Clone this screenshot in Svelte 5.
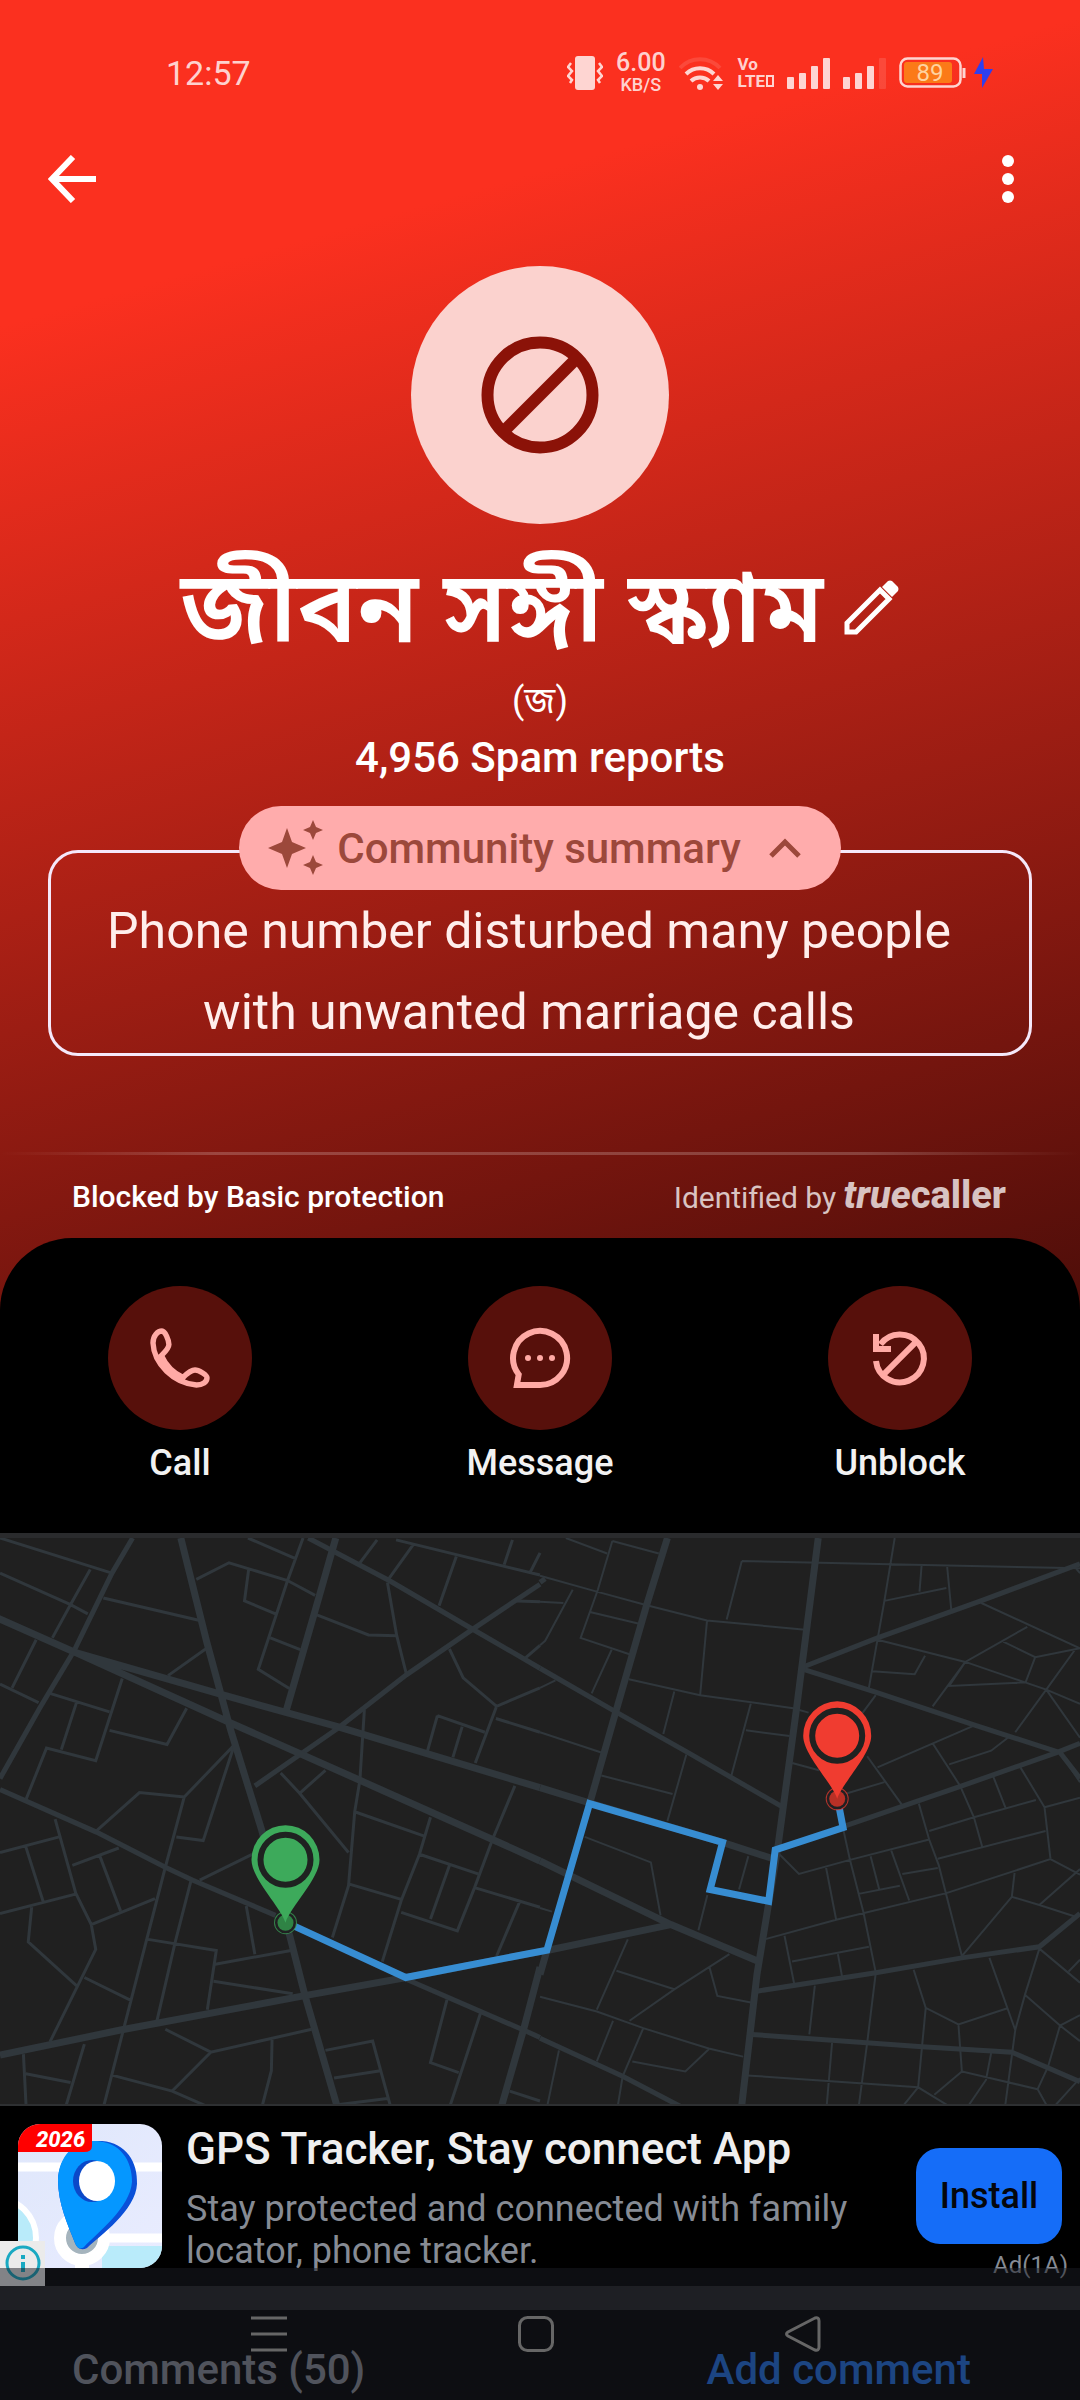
<script lang="ts">
  const actions = ['Call', 'Message', 'Unblock'];
  const bars = [12, 16, 23, 31];

  // street map, drawn as two tiles next to each other
  const west = {
    wide:
      'M-10 235L220 330L650 445L980 530L1568 695 M220 330L670 520L1045 675L1430 835L1568 893 M525 20L600 300L670 540L760 810L829 1050L885 1255L980 1560 M0 1418L350 1350L885 1257L1180 1208L1568 1138 M975 20L920 200L830 490 M1568 1180L1520 1350L1455 1560',
    mid:
      'M740 690L980 535L1180 390L1375 265L1568 145 M895 20L1130 135L1375 268L1568 372 M385 20L325 115L215 325L115 480L0 670 M0 700L280 815L480 910L560 945L800 1040 M1178 1212L1520 1350L1568 1370',
    thin:
      'M0 20L325 115 M0 115L205 200L255 225 M262 105L205 200L152 290 M300 182L580 243 M570 132L665 87L835 135L915 175 M722 105L710 190L800 225 M880 20L835 135L750 375L840 427 M785 290L872 322 M720 20L858 76 M600 318L488 392 M920 228L1070 282L1152 284 M1125 140L1152 284L1180 388 M1200 38L1125 135 M1095 25L1045 87 M1150 25L1568 120 M1325 70L1275 203 M1488 25L1464 92 M1568 60L1540 112 M1500 190L1568 192 M1305 320L1345 398L1442 475L1568 425 M1442 475L1380 628 M1440 508L1568 545 M1270 500L1240 600 M1270 500L1408 545 M1342 530L1315 613 M1568 310L1525 345 M105 295L35 425 M0 415L112 465 M145 440L318 490 M355 400L278 622L135 588L75 728 M222 465L178 592 M318 540L485 578L542 480 M680 580L535 720L405 708L280 812 M680 580L590 838L512 828 M535 720L480 910L300 1560 M1058 485L1045 675L1030 760L1012 960L965 1100 M815 655L870 710L1012 870 M870 710L945 648 M1030 760L1230 825 M1250 775L1218 875L1165 1000L1110 1165 M1218 875L1388 928 M1430 835L1378 965L1328 1082L1165 1032 M1305 905L1250 1050 M1012 955L1165 997 M1495 690L1430 835 M1378 965L1568 1018 M1508 1005L1442 1150 M0 870L172 828 M160 780L220 980L265 1065L278 1132L145 1382 M75 855L125 1002 M0 1035L222 982 M92 1018L82 1112L222 1230 M210 905L345 858 M290 880L350 1028 M265 1065L450 995 M555 945L508 1115L455 1328 M430 1105L628 1135L602 1295 M625 1172L845 1135 M715 1015L740 1145 M620 1218L850 1252 M580 945L732 875 M245 1208L380 1270 M68 1415L76 1560 M75 1468L205 1492 M245 1388L190 1560 M325 1472L500 1515L610 1560 M480 1348L612 1410L905 1348 M612 1410L500 1515 M790 1375L788 1460L760 1560 M945 1405L1082 1380L1135 1560 M970 1480L1105 1460 M980 1552L1125 1535 M1298 1268L1250 1438L1332 1465 M1395 1305L1305 1560 M1480 1515L1568 1542'
  };
  const east = {
    wide:
      'M0 695L140 735L530 843L670 885 M0 893L380 1065L635 1165 M20 1135L380 1065 M370 20L310 200L220 490L145 735 M20 1135L0 1200 M808 20L745 480L690 860L630 1200L585 1560',
    mid:
      'M0 140L15 130 M0 372L220 490L430 600L700 745 M760 370L980 290L1280 190L1568 90 M765 375L970 435L1260 525L1510 600L1568 670 M880 800L1225 690L1500 600L1568 575 M630 1245L975 1195L1225 1155L1450 1125L1568 1035 M615 1362L1110 1395L1370 1410L1568 1490 M0 1372L240 1475L415 1560',
    thin:
      'M75 20L195 62 M210 28L345 62 M210 28L168 160L118 290L262 335 M0 122L165 165L310 202L485 243L770 268 M145 220L288 252 M0 192L68 196 M95 160L15 298L0 310 M208 322L150 440 M0 425L45 405 M586 82L1568 102 M586 82L542 240 M485 243L465 445 M258 402L465 445L735 480L780 492 M390 435L358 550 M612 468L555 665 M598 540L725 555 M0 545L178 600 M425 605L370 785 M178 662L385 712 M1030 20L1000 190L955 425 M1108 95L1102 165 M1000 190L1180 155 M1182 95L1194 212 M1280 195L1568 318L1438 342L1345 300 M1415 260L1235 355L1188 420L1410 410L1438 342 M980 295L1235 355L1470 430L1568 468 M965 380L1088 388L1118 338 M1235 355L1140 475 M1555 320L1470 430L1380 545 M1470 430L1568 560 M1550 95L1568 115 M975 445L935 495 M732 628L810 648 M980 640L1260 527 M950 610L1050 740 M1140 575L1220 690L1260 775L1285 858 M1188 632L1310 595L1365 555 M885 712L1000 680 M1315 662L1352 750 M1395 640L1465 748L1482 885 M1130 812L1260 775L1440 728 M1465 748L1568 722 M1155 887L1468 812 M1510 600L1568 680 M1100 738L1130 835L1158 905L1225 1150 M880 805L900 890L940 1035L975 1195L950 1385L925 1560 M690 870L752 928L900 890L1130 835 M830 908L860 1052 M960 880L985 970 M1020 865L1072 1000 M925 982L1045 960 M1052 928L1155 912 M652 1105L860 1052L1180 980L1482 888L1568 930 M710 1095L738 1225 M732 1165L955 1125 M865 1145L878 1210 M1378 925L1370 990L1225 1150 M1370 990L1450 1012L1560 1045 M1450 1012L1568 915 M130 828L322 897L350 1040 M605 880L578 970 M486 985L460 1080 M0 1020L35 1030 M255 1105L165 1295 M222 1190L390 1240 M550 1145L390 1240L260 1325 M492 1180L515 1258L620 1277 M0 1260L165 1300L300 1345L490 1400L590 1422 M212 1325L165 1435 M300 1345L240 1475L225 1560 M268 1435L422 1462L490 1402 M55 1405L20 1560 M798 1230L782 1362 M1085 1187L1120 1290L1215 1335L1355 1292 M1305 1155L1380 1350L1350 1560 M1450 1130L1408 1255L1380 1350 M1408 1255L1510 1338L1568 1380 M1510 1338L1475 1450L1445 1510L1475 1560 M1568 1310L1510 1338 M1450 1130L1568 1222 M1535 1192L1568 1160 M1215 1335L1225 1462L1445 1510 M1120 1290L1098 1505L1050 1560 M590 1472L1098 1505L1195 1560 M848 1385L832 1560 M1225 1462L1145 1525 M1310 1412L1295 1485L1240 1560 M1568 1480L1490 1560'
  };
</script>

{#snippet pin(x: number, y: number, color: string, dark: string)}
  <g transform="translate({x} {y}) scale(2.904 2.703)">
    <circle r="11" fill="#202022" stroke={color} stroke-opacity="0.7" />
    <circle r="8" fill={dark} />
    <path d="M0 0C-5-16-34-44-34-63A33.500 34 0 0 1 34-63C34-44 5-16 0 0Z" fill={color} />
    <circle cy="-63" r="25" fill="none" stroke="#1f2221" stroke-width="6" />
  </g>
{/snippet}

{#snippet signal(weakLast: boolean)}
  <svg width="43" height="31" viewBox="0 0 43 31" fill="currentColor">
    {#each bars as h, i}
      <rect x={i * 12} y={31 - h} width="7" height={h} rx="1" opacity={weakLast && i === 3 ? 0.15 : 1} />
    {/each}
  </svg>
{/snippet}

<div class="page">
  <div class="status-bar">
    <span class="clock">12:57</span>
    <div class="status-icons">
      <svg width="36" height="36" viewBox="0 0 36 36">
        <rect x="8" y="1" width="20" height="34" rx="3" fill="currentColor" />
        <path d="M4 8L1 12L5 16L1 21L5 25L3 28M32 8L35 12L31 16L35 21L31 25L33 28" fill="none" stroke="currentColor" stroke-width="2.500" />
      </svg>
      <span class="speed"><b>6.00</b><small>KB/S</small></span>
      <svg class="wifi" width="46" height="34" viewBox="0 0 46 34" fill="none" stroke="currentColor" stroke-width="4">
        <path d="M1 12A27 27 0 0 1 41 12" opacity="0.15" />
        <path d="M7 18A20 20 0 0 1 35 18" />
        <path d="M12 25A13 13 0 0 1 30 25" />
        <circle cx="21" cy="31" r="3" fill="currentColor" stroke="none" />
        <path d="M34 25L39 19L44 25ZM34 28H44L39 34Z" fill="currentColor" stroke="none" />
      </svg>
      <span class="volte"><span>Vo</span><span>LTE<i></i></span></span>
      {@render signal(false)}
      {@render signal(true)}
      <svg class="battery" width="94" height="34" viewBox="0 0 94 34">
        <rect x="1.500" y="2.500" width="60" height="28" rx="7" fill="none" stroke="currentColor" stroke-width="2.500" />
        <rect x="5" y="6" width="48" height="21" rx="3" fill="#fb7a18" />
        <path d="M65 12V22" stroke="currentColor" stroke-width="3" />
        <text x="31" y="25" text-anchor="middle" font-size="24" fill="#ffd3a0">89</text>
        <path d="M84 1L75 18H83V32L94 13H85Z" fill="#2f3fee" />
      </svg>
    </div>
  </div>

  <div class="top-bar">
    <button class="icon-button" aria-label="Back">
      <svg width="48" height="48" viewBox="0 0 48 48" fill="none" stroke="#fff" stroke-width="6">
        <path d="M25 2L4 24L25 46M4 24H48" />
      </svg>
    </button>
    <button class="icon-button" aria-label="More options">
      <svg width="48" height="48" viewBox="0 0 48 48" fill="#fff">
        <circle cx="24" cy="6" r="6" /><circle cx="24" cy="24" r="6" /><circle cx="24" cy="42" r="6" />
      </svg>
    </button>
  </div>

  <header class="profile">
    <div class="avatar">
      <svg width="118" height="118" viewBox="0 0 118 118" fill="none" stroke="#8b1208">
        <circle cx="59" cy="59" r="52.500" stroke-width="12" />
        <path d="M22 96L96 22" stroke-width="12" />
      </svg>
    </div>
    <div class="name-row">
      <h1>জীবন সঙ্গী স্ক্যাম</h1>
      <button class="icon-button" aria-label="Edit name">
        <svg width="56" height="56" viewBox="0 0 56 56">
          <path d="M4 43L37 10L46 19L13 52H4Z" fill="none" stroke="#fff" stroke-width="5" />
          <path d="M39 7L45 1Q47 0 49 1L55 7Q56 9 55 11L49 17Z" fill="#fff" />
        </svg>
      </button>
    </div>
    <p class="alt-name">(জ)</p>
    <p class="reports">4,956 Spam reports</p>
  </header>

  <section class="summary">
    <button class="pill">
      <svg width="56" height="56" viewBox="0 0 56 56" fill="#9c483b">
        <path d="M20 8L25 22L39 28L25 34L20 48L15 34L1 28L15 22Z" />
        <path d="M46 0L49 7L56 10L49 13L46 20L43 13L36 10L43 7Z" />
        <path d="M46 35L49 42L56 45L49 48L46 55L43 48L36 45L43 42Z" />
      </svg>
      <span>Community summary</span>
      <svg class="chevron" width="32" height="20" viewBox="0 0 32 20" fill="none" stroke="#9c483b" stroke-width="5">
        <path d="M2 18L16 4L30 18" />
      </svg>
    </button>
    <p class="summary-text">Phone number disturbed many people<br />with unwanted marriage calls</p>
  </section>

  <hr />

  <div class="source">
    <span class="blocked">Blocked by Basic protection</span>
    <span class="identified">Identified by <span class="brand"><i>true</i>caller</span></span>
  </div>

  <nav class="actions">
    {#each actions as action}
      <button class="action">
        <span class="action-circle">
          <svg width="72" height="72" viewBox="0 0 24 24" fill="none" stroke="#ffaaa5" stroke-width="2">
            {#if action === 'Call'}
              <path d="M3 7C3 4.500 4.600 3 6 3C7 3 8.300 6 8.300 7.500C8.300 8.800 6.500 10.500 5.800 11.200C7.300 14.500 9.800 17 13 18.500C14 17.500 15.500 16 17 16C18.200 16 21 17.600 21 18.600C21 20 19.500 21 17.500 21C10 20.500 3.300 14 3 7Z" stroke-width="1.800" />
            {:else if action === 'Message'}
              <path d="M12 21H4.300L4.900 17.500A9 9 0 1 1 12 21Z" />
              <g fill="#ffaaa5" stroke="none"><circle cx="8" cy="12" r="1" /><circle cx="12" cy="12" r="1" /><circle cx="16" cy="12" r="1" /></g>
            {:else}
              <path d="M4 13A8 8 0 1 0 5.500 7.400M4 4V9H9M6.400 17.600L17.600 6.400" />
            {/if}
          </svg>
        </span>
        {action}
      </button>
    {/each}
  </nav>

  <section class="ad">
    <svg class="map" viewBox="0 20 3136 1530" preserveAspectRatio="none" role="img" aria-label="Route map">
      {#each [west, east] as tile, i}
        <g transform="translate({i * 1568} 0)">
          <path class="road thin" class:faint={i === 1} d={tile.thin} />
          <path class="road mid" d={tile.mid} />
          <path class="road wide" d={tile.wide} />
        </g>
      {/each}
      <path class="road route" d="M845 1065L1178 1208L1588 1134L1712 738L2098 843L2062 970L2232 1002L2251 863L2448 803L2434 735" />
      {@render pin(829, 1060, '#3daa5b', '#2f8345')}
      {@render pin(2431, 725, '#f03c30', '#b93026')}
    </svg>

    <div class="ad-row">
      <svg class="app-icon" width="144" height="144" viewBox="0 0 144 144">
        <defs>
          <clipPath id="tile"><rect width="144" height="144" rx="22" /></clipPath>
          <linearGradient id="land" x1="0" y1="0" x2="1" y2="1">
            <stop offset="0" stop-color="#dfe7fb" />
            <stop offset="1" stop-color="#e9ecff" />
          </linearGradient>
        </defs>
        <g clip-path="url(#tile)">
          <rect width="144" height="144" fill="url(#land)" />
          <circle cx="-22" cy="114" r="40" fill="#b9ebfa" stroke="#fff" stroke-width="6" />
          <path d="M84 122H144V144H84Z" fill="#b9ebfa" />
          <path d="M0 43H144M64 114H144" stroke="#fff" stroke-width="9" />
          <path d="M64 120V144" stroke="#fff" stroke-width="14" />
          <circle cx="64" cy="114" r="22" fill="#a5b4bd" stroke="#fff" stroke-width="12" />
          <path d="M84 17C108 19 120 38 119 60C118 86 82 112 69 124C63 127 59 124 57 119C50 101 40 80 40 56C41 32 58 16 84 17Z" fill="#0a50d8" />
          <path d="M78 17C102 18 114 36 114 58C112 84 80 108 66 123C62 126 59 124 57 119C50 101 40 80 40 56C41 32 56 16 78 17Z" fill="#0597ff" />
          <ellipse cx="74" cy="57" rx="19" ry="21" fill="#0b49c9" />
          <ellipse cx="79" cy="57" rx="18" ry="20" fill="#fff" />
          <path d="M0 0H74V22Q74 28 66 28H0Z" fill="#f00" />
          <text x="18" y="23" font-size="22" font-weight="800" font-style="italic" fill="#fff">2026</text>
        </g>
      </svg>
      <div class="ad-copy">
        <h2>GPS Tracker, Stay connect App</h2>
        <p>Stay protected and connected with family locator, phone tracker.</p>
      </div>
      <div class="ad-side">
        <button class="install">Install</button>
        <span class="ad-tag">Ad(1A)</span>
      </div>
      <button class="ad-info" aria-label="About this ad">
        <svg width="45" height="45" viewBox="0 0 45 45" fill="none" stroke="#19a9c2">
          <circle cx="23" cy="22" r="16" stroke-width="3" />
          <path d="M23 14V18M23 21V31" stroke-width="4" />
        </svg>
      </button>
    </div>
  </section>

  <section class="comments">
    <h2>Comments (50)</h2>
    <a href="#comment">Add comment</a>
  </section>
</div>

<div class="system-nav">
  <button class="icon-button" aria-label="Recent apps">
    <svg width="36" height="36" viewBox="0 0 36 36" stroke="currentColor" stroke-width="3">
      <path d="M0 2H36M0 18H36M0 34H36" />
    </svg>
  </button>
  <button class="icon-button" aria-label="Home">
    <svg width="36" height="36" viewBox="0 0 36 36" fill="none" stroke="currentColor" stroke-width="3">
      <rect x="1.500" y="1.500" width="33" height="33" rx="8" />
    </svg>
  </button>
  <button class="icon-button" aria-label="Back">
    <svg width="36" height="36" viewBox="0 0 36 36" fill="none" stroke="currentColor" stroke-width="3">
      <path d="M30 2L3 16Q0 18 3 20L30 34Q34 35 34 31V5Q34 1 30 2Z" />
    </svg>
  </button>
</div>

<style>
  :global(body) {
    background: #000;
  }

  .page {
    font-family: Roboto, 'Noto Sans Bengali', 'Noto Sans', sans-serif;
    color: #fff;
    background: linear-gradient(164deg, #fb301f 20%, #4c0d09 100%) no-repeat;
    background-size: 100% 1320px;
  }

  h1, h2, p {
    margin: 0;
  }

  button {
    font-family: inherit;
    border: none;
    padding: 0;
  }

  svg {
    display: block;
    flex: none;
  }

  .icon-button {
    background: none;
    color: inherit;
  }

  .status-bar {
    box-sizing: border-box;
    height: 112px;
    padding: 34px 87px 0 166px;
    display: flex;
    align-items: center;
    justify-content: space-between;
    color: rgba(255, 255, 255, 0.8);
  }

  .clock {
    font-size: 34px;
  }

  .status-icons {
    display: flex;
    align-items: center;
    gap: 13px;
  }

  .speed, .volte {
    display: flex;
    flex-direction: column;
    align-items: center;
  }

  .speed b {
    font-size: 25px;
    font-weight: 500;
    line-height: 24px;
  }

  .speed small {
    font-size: 18px;
    font-weight: 500;
    line-height: 20px;
  }

  .volte {
    align-items: flex-start;
    font-size: 17px;
    font-weight: 700;
    line-height: 17px;
  }

  .volte i {
    display: inline-block;
    width: 4px;
    height: 8px;
    margin-left: 1px;
    border: 2px solid currentColor;
  }

  .top-bar {
    height: 134px;
    padding: 0 48px;
    display: flex;
    align-items: center;
    justify-content: space-between;
  }

  .profile {
    padding-top: 20px;
    display: flex;
    flex-direction: column;
    align-items: center;
    text-align: center;
  }

  .avatar {
    width: 258px;
    height: 258px;
    border-radius: 50%;
    background: #fbd2ce;
    display: grid;
    place-items: center;
  }

  .name-row {
    display: flex;
    align-items: center;
    gap: 20px;
    margin: 28px 0 10px;
    height: 112px;
  }

  h1 {
    font-size: 100px;
    font-weight: 600;
    line-height: 112px;
    white-space: nowrap;
  }

  .alt-name {
    font-size: 36px;
    line-height: 54px;
  }

  .reports {
    font-size: 42px;
    font-weight: 500;
    line-height: 60px;
  }

  .summary {
    display: flex;
    flex-direction: column;
    align-items: center;
    margin: 18px 48px 0;
  }

  .pill {
    z-index: 1;
    height: 84px;
    margin-bottom: -40px;
    padding: 0 40px 0 28px;
    display: flex;
    align-items: center;
    gap: 14px;
    border-radius: 42px;
    background: #ffacac;
    color: #9c483b;
    font-size: 42px;
    font-weight: 500;
  }

  .chevron {
    margin-left: 14px;
  }

  .summary-text {
    box-sizing: border-box;
    width: 100%;
    padding: 38px 36px 0 14px;
    border: 3px solid #f5e8fa;
    border-radius: 30px;
    color: #ffeeec;
    font-size: 50px;
    line-height: 81px;
    text-align: center;
  }

  hr {
    height: 3px;
    margin: 96px 0 0;
    border: none;
    background: linear-gradient(90deg, transparent, rgba(255, 255, 255, 0.2) 20%, rgba(255, 255, 255, 0.2) 80%, transparent);
  }

  .source {
    height: 83px;
    padding: 0 74px 0 72px;
    display: flex;
    align-items: center;
    justify-content: space-between;
    font-size: 30px;
  }

  .blocked {
    font-weight: 500;
  }

  .identified {
    color: rgba(255, 255, 255, 0.75);
    line-height: 36px;
  }

  .brand {
    font-size: 38px;
    font-weight: 800;
  }

  .actions {
    display: grid;
    grid-template-columns: repeat(3, 1fr);
    padding: 48px 0 49px;
    border-radius: 72px 72px 0 0;
    background: #000;
  }

  .action {
    display: flex;
    flex-direction: column;
    align-items: center;
    gap: 12px;
    background: none;
    color: #f2f2f2;
    font-size: 36px;
    font-weight: 500;
    line-height: 42px;
  }

  .action-circle {
    width: 144px;
    height: 144px;
    border-radius: 50%;
    background: #57100b;
    display: grid;
    place-items: center;
  }

  .ad {
    background: #000;
  }

  .map {
    width: 100%;
    aspect-ratio: 1080 / 566;
    border-top: 5px solid #2a2b2d;
    border-bottom: 2px solid #2e3032;
    background: #202020;
  }

  .road {
    fill: none;
    stroke: #30373c;
    vector-effect: non-scaling-stroke;
  }

  .wide {
    stroke-width: 7px;
  }

  .mid {
    stroke-width: 5px;
  }

  .thin {
    stroke-width: 3px;
  }

  .faint {
    stroke-width: 2px;
  }

  .route {
    stroke: #378dd2;
    stroke-width: 7px;
  }

  .ad-row {
    position: relative;
    box-sizing: border-box;
    height: 180px;
    padding: 18px 12px 0 18px;
    display: flex;
    gap: 24px;
  }

  .ad-copy {
    flex: 1;
  }

  .ad-copy h2 {
    color: #efefef;
    font-size: 44px;
    font-weight: 500;
    line-height: 50px;
  }

  .ad-copy p {
    max-width: 690px;
    margin-top: 14px;
    color: #868b94;
    font-size: 36px;
    line-height: 42px;
  }

  .ad-side {
    display: flex;
    flex-direction: column;
    align-items: flex-end;
    gap: 6px;
    padding-top: 24px;
  }

  .install {
    flex: none;
    width: 146px;
    height: 96px;
    margin-right: 6px;
    border-radius: 24px;
    background: #156df8;
    color: #05070c;
    font-size: 36px;
    font-weight: 500;
  }

  .ad-tag {
    color: #868b94;
    font-size: 24px;
    line-height: 30px;
  }

  .ad-info {
    position: absolute;
    left: 0;
    bottom: 0;
    background: #ebebeb;
  }

  .comments {
    display: flex;
    justify-content: space-between;
    border-top: 24px solid #222224;
    padding: 35px 109px 6px 72px;
    background: #000;
    font-size: 42px;
    line-height: 50px;
  }

  .comments h2 {
    color: #868b94;
    font-size: inherit;
    font-weight: 500;
  }

  .comments a {
    color: #1f6fe0;
    font-weight: 500;
    text-decoration: none;
  }

  .system-nav {
    position: fixed;
    left: 0;
    right: 0;
    bottom: 0;
    box-sizing: border-box;
    height: 132px;
    padding: 48px 259px 0 251px;
    display: flex;
    justify-content: space-between;
    align-items: flex-start;
    background: rgba(26, 28, 36, 0.5);
    color: #666;
  }
</style>
